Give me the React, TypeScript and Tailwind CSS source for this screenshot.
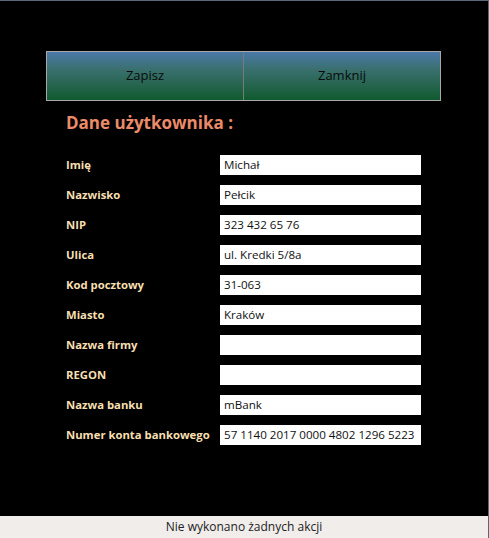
const fields: { label: string; value: string }[] = [
  { label: "Imię", value: "Michał" },
  { label: "Nazwisko", value: "Pełcik" },
  { label: "NIP", value: "323 432 65 76" },
  { label: "Ulica", value: "ul. Kredki 5/8a" },
  { label: "Kod pocztowy", value: "31-063" },
  { label: "Miasto", value: "Kraków" },
  { label: "Nazwa firmy", value: "" },
  { label: "REGON", value: "" },
  { label: "Nazwa banku", value: "mBank" },
  { label: "Numer konta bankowego", value: "57 1140 2017 0000 4802 1296 5223" },
];

export default function App() {
  return (
    <div
      className="w-[489px] h-[538px] bg-black flex flex-col border-t border-r border-[#5b6878] overflow-hidden"
      style={{ fontFamily: "'Open Sans', 'Noto Sans', sans-serif" }}
    >
      <div className="flex-1 pl-[46px] pt-[50px]">
        <div className="flex w-[395px] h-[50px] border border-[#a8a8a8]">
          <button className="flex-1 flex items-center justify-center text-[13px] text-[#0a0a0a] bg-gradient-to-b from-[#4a78a8] via-[#3a7070] via-[35%] to-[#0f5a2e] border-r border-[#7a7a7a]">
            Zapisz
          </button>
          <button className="flex-1 flex items-center justify-center text-[13px] text-[#0a0a0a] bg-gradient-to-b from-[#4a78a8] via-[#3a7070] via-[35%] to-[#0f5a2e]">
            Zamknij
          </button>
        </div>

        <h1 className="ml-[20px] mt-[10px] text-[17px] leading-[24px] font-bold text-[#ec8a69]">
          Dane użytkownika :
        </h1>

        <div className="ml-[20px] mt-[20px] flex flex-col gap-[10px]">
          {fields.map((f) => (
            <div key={f.label} className="flex items-center h-[20px]">
              <span className="w-[154px] text-[11.3px] font-bold text-[#f6dfb0] whitespace-nowrap">
                {f.label}
              </span>
              <div className="w-[201px] h-[20px] bg-white pl-[4px] flex items-center text-[11.6px] text-[#111] whitespace-nowrap overflow-hidden">
                {f.value}
              </div>
            </div>
          ))}
        </div>
      </div>

      <div className="h-[22px] bg-[#f0edeb] flex items-center justify-center text-[12px] text-[#222]">
        Nie wykonano żadnych akcji
      </div>
    </div>
  );
}
